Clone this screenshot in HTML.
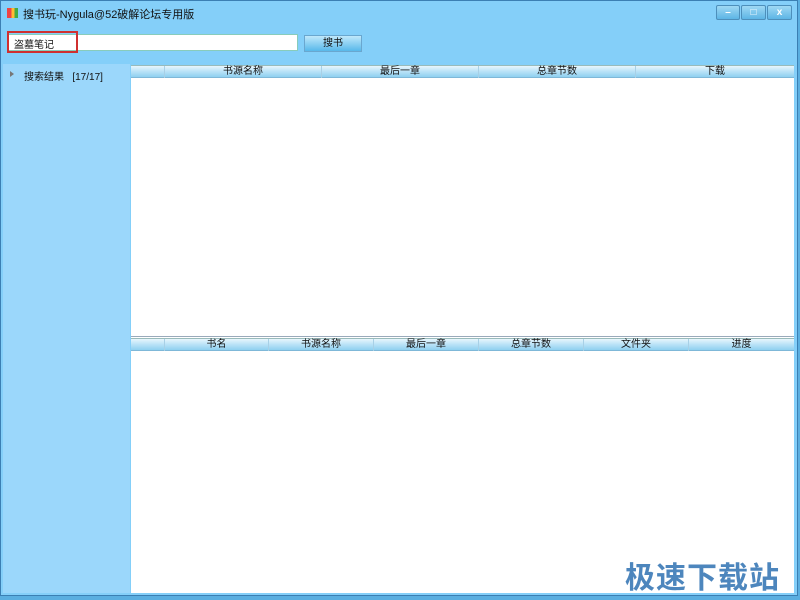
<!DOCTYPE html>
<html><head><meta charset="utf-8"><style>
body{margin:0;width:800px;height:600px;overflow:hidden;background:#5aaee0;font-family:"Liberation Sans","Noto Sans CJK SC",sans-serif;font-size:10px;color:#111;position:relative}
.win{position:absolute;left:0;top:0;width:798px;height:596px;background:#84cff9;border:1px solid #3b7fb3;box-sizing:border-box}
.abs{position:absolute}
.hdr{position:absolute;height:13px;background:linear-gradient(#e8f6fd,#b9e2f7 50%,#8fd0f0);border-top:1px solid #9bb;border-bottom:1px solid #7fb8d8;box-sizing:border-box}
.hdr span{position:absolute;top:0;text-align:center;line-height:12px;border-left:1px solid #a8d0e6;box-sizing:border-box;height:12px}
.btn{position:absolute;top:4px;height:15px;border:1px solid #4d8fbb;background:linear-gradient(#9fd8f4,#5db5e5);border-radius:2px;box-sizing:border-box;color:#fff;text-align:center;font-size:10px;line-height:13px;font-weight:bold}
</style></head><body>
<div class="win">
<div class="abs" style="left:6px;top:7px;width:11px;height:10px;background:linear-gradient(90deg,#e44 0 40%,#fb3 40% 70%,#4a4 70%)"></div>
<div class="abs" style="left:22px;top:5px;font-size:11px">搜书玩-Nygula@52破解论坛专用版</div>
<div class="btn" style="left:715px;width:24px">–</div>
<div class="btn" style="left:740px;width:25px">□</div>
<div class="btn" style="left:766px;width:25px">x</div>
<div class="abs" style="left:7px;top:33px;width:290px;height:17px;background:#fff;border:1px solid #8cb;box-sizing:border-box"></div>
<div class="abs" style="left:6px;top:30px;width:71px;height:22px;border:2px solid #d03030;box-sizing:border-box"></div>
<div class="abs" style="left:13px;top:35px">盗墓笔记</div>
<div class="abs" style="left:303px;top:34px;width:58px;height:17px;background:linear-gradient(#bfe8fb,#58b8ea);border:1px solid #6aa7cf;box-sizing:border-box;text-align:center;line-height:15px">搜书</div>
<div class="abs" style="left:2px;top:63px;width:127px;height:529px;background:#9bd7fb"></div>
<div class="abs" style="left:9px;top:70px;width:0;height:0;border-left:4px solid #777;border-top:3px solid transparent;border-bottom:3px solid transparent"></div>
<div class="abs" style="left:23px;top:67px">搜索结果&nbsp;&nbsp;&nbsp;[17/17]</div>
<div class="abs" style="left:130px;top:64px;width:663px;height:271px;background:#fff"></div>
<div class="hdr" style="left:130px;top:64px;width:663px">
<span style="left:33px;width:157px">书源名称</span><span style="left:190px;width:157px">最后一章</span><span style="left:347px;width:157px">总章节数</span><span style="left:504px;width:159px">下载</span></div>
<div class="abs" style="left:130px;top:335px;width:663px;height:1px;background:#9ab"></div>
<div class="abs" style="left:130px;top:336px;width:663px;height:256px;background:#fff"></div>
<div class="hdr" style="left:130px;top:337px;width:663px">
<span style="left:33px;width:104px">书名</span><span style="left:137px;width:105px">书源名称</span><span style="left:242px;width:105px">最后一章</span><span style="left:347px;width:105px">总章节数</span><span style="left:452px;width:105px">文件夹</span><span style="left:557px;width:106px">进度</span></div>
<div class="abs" style="left:624px;top:552px;font-size:30px;font-weight:bold;color:#4d86bd;letter-spacing:1px">极速下载站</div>
</div>
</body></html>
